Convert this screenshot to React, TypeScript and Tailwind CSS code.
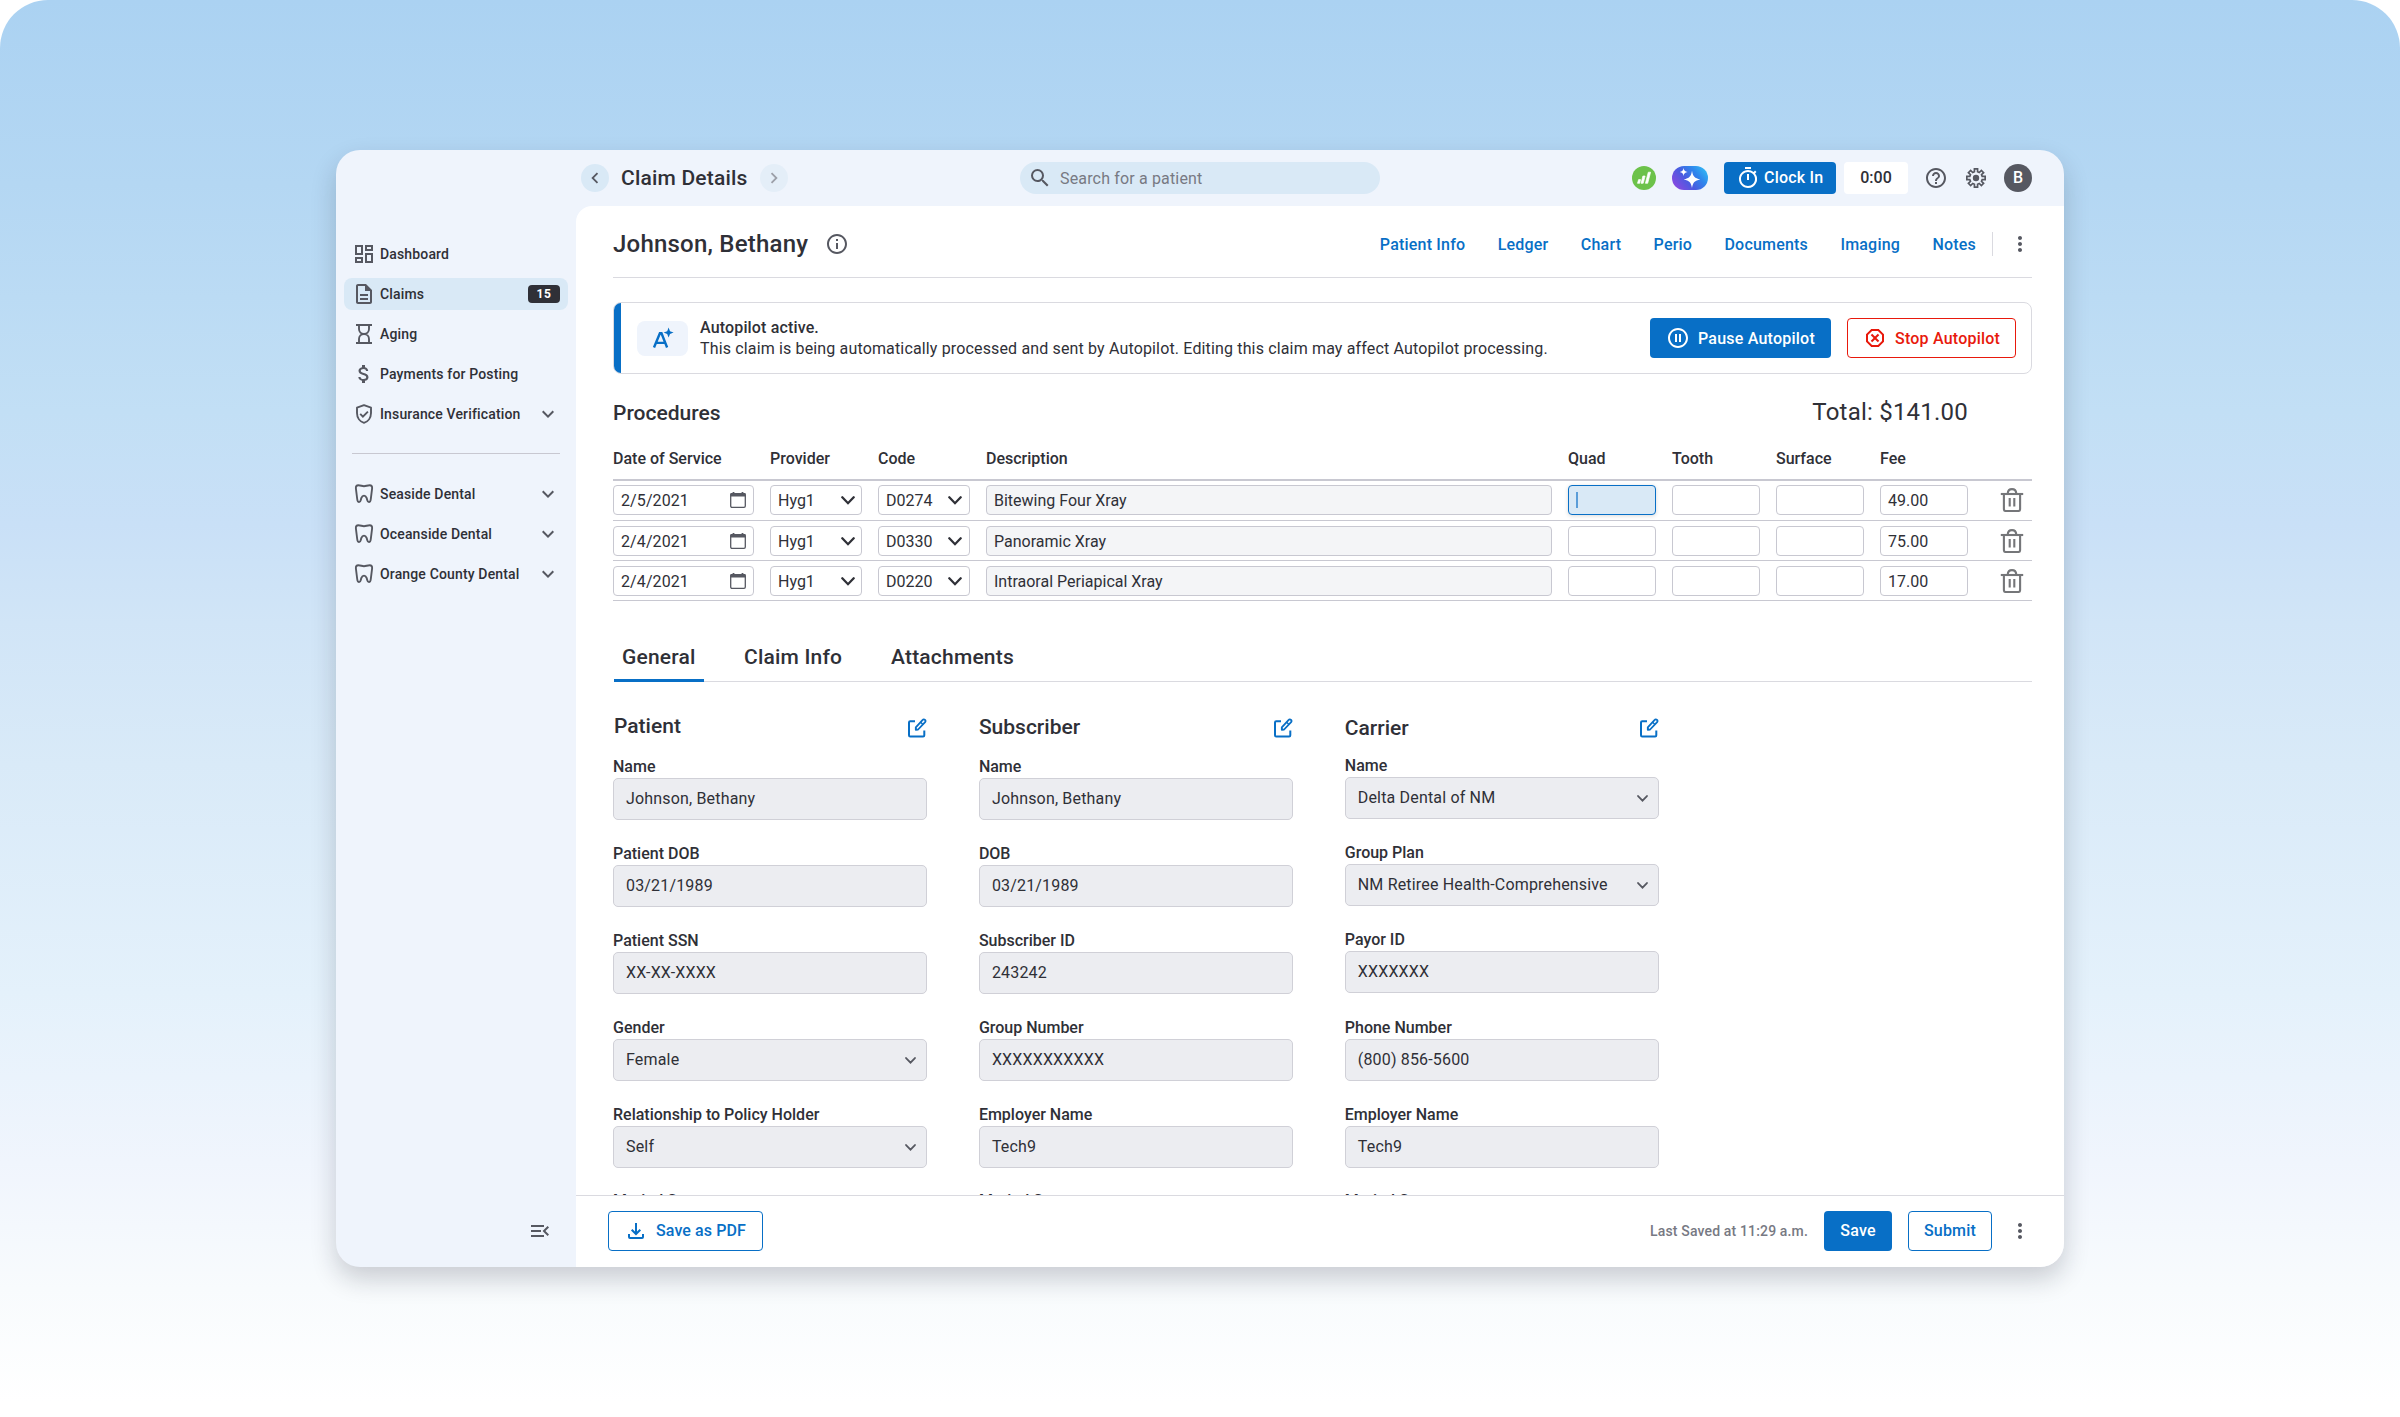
import type { ComponentType, ReactNode } from "react";
import {
  MdAttachMoney,
  MdChevronLeft,
  MdChevronRight,
  MdHelpOutline,
  MdInfoOutline,
  MdKeyboardArrowDown,
  MdMenuOpen,
  MdMoreVert,
  MdOutlineDangerous,
  MdOutlineDashboard,
  MdOutlineDescription,
  MdOutlineTimer,
  MdPauseCircleOutline,
  MdSearch,
} from "react-icons/md";

type IconProps = { className?: string };

function HourglassIcon({ className }: IconProps) {
  return (
    <svg viewBox="0 0 24 24" fill="none" stroke="currentColor" strokeWidth="2" className={className}>
      <path d="M4 3h16M4 21h16" />
      <path d="M7 3v4c0 2.8 2.2 5 5 5s5-2.2 5-5V3M7 21v-4c0-2.8 2.2-5 5-5s5 2.2 5 5v4" strokeWidth="1.9" />
    </svg>
  );
}

function ShieldCheckIcon({ className }: IconProps) {
  return (
    <svg viewBox="0 0 24 24" fill="none" stroke="currentColor" strokeWidth="1.9" className={className}>
      <path d="M12 3.100 5 5.700v5.400c0 4.600 2.900 8.600 7 9.800 4.100-1.200 7-5.200 7-9.800V5.700z" strokeLinejoin="round" />
      <path d="m8.200 11.900 2.700 2.700 5-5" />
    </svg>
  );
}

function ToothIcon({ className }: IconProps) {
  return (
    <svg viewBox="0 0 24 24" fill="none" stroke="currentColor" strokeWidth="1.9" strokeLinejoin="round" className={className}>
      <path d="M6.400 3.300c2.400 0 3.500.9 5.600.9s3.200-.9 5.600-.9c2.100 0 2.700 1.200 2.500 3.200l-1.300 10.500c-.2 1.900-.8 3.100-1.900 3.100-1.700 0-1.500-2.200-2.300-4.200C14 14.400 13 13.600 12 13.600s-2 .8-2.600 2.300c-.8 2-.6 4.200-2.300 4.200-1.100 0-1.700-1.200-1.900-3.100L3.900 6.500C3.700 4.500 4.300 3.300 6.400 3.300z" />
    </svg>
  );
}

function GearIcon({ className }: IconProps) {
  const pts: string[] = [];
  for (let i = 0; i < 8; i++) {
    const base = (i * Math.PI) / 4 - Math.PI / 2;
    const ring: [number, number][] = [
      [-0.25, 6.4],
      [-0.17, 9.3],
      [0.17, 9.3],
      [0.25, 6.4],
    ];
    for (const [da, r] of ring) {
      pts.push(`${(12 + r * Math.cos(base + da)).toFixed(2)},${(12 + r * Math.sin(base + da)).toFixed(2)}`);
    }
  }
  return (
    <svg viewBox="0 0 24 24" className={className}>
      <polygon points={pts.join(" ")} fill="none" stroke="currentColor" strokeWidth="1.7" strokeLinejoin="miter" />
      <circle cx="12" cy="12" r="3.2" fill="currentColor" />
    </svg>
  );
}

function DownloadIcon({ className }: IconProps) {
  return (
    <svg viewBox="0 0 24 24" fill="none" stroke="currentColor" strokeWidth="2" className={className}>
      <path d="M12 4v11M7.700 10.700 12 15l4.300-4.300M5 15v3c0 .6.4 1 1 1h12c.6 0 1-.4 1-1v-3" />
    </svg>
  );
}

function EditIcon({ className }: IconProps) {
  return (
    <svg viewBox="0 0 20 20" fill="none" stroke="currentColor" strokeWidth="2" strokeLinejoin="round" className={className}>
      <path d="M8 3.200H3.200A1.200 1.200 0 0 0 2 4.400v12.900c0 .7.5 1.200 1.200 1.200h12.900c.7 0 1.200-.5 1.200-1.200V12.500" />
      <path d="M8.800 11.900v-2.500l6.900-7.500a1.500 1.500 0 0 1 2.200-.1l.2.200c.6.600.6 1.500 0 2.100l-7 7.400z" strokeWidth="1.800" />
      <path d="m13.700 4.200 2.200 2.200" strokeWidth="1.400" />
    </svg>
  );
}

function TrashIcon({ className }: IconProps) {
  return (
    <svg viewBox="0 0 24 24" fill="none" stroke="currentColor" strokeWidth="2.100" className={className}>
      <path d="M.8 6h22.400" />
      <path d="M7.700 5.500C7.900 2.800 9.700 1.100 12 1.100s4.100 1.700 4.300 4.400" />
      <path d="M3.900 6v15.200c0 1.100.7 1.800 1.800 1.800h12.600c1.100 0 1.800-.7 1.800-1.800V6" />
      <path d="M9.700 10v8.500M14.300 10v8.500" />
    </svg>
  );
}

function CalendarIcon({ className }: IconProps) {
  return (
    <svg viewBox="0 0 16 16" className={className}>
      <rect x="0.7" y="1.6" width="14.6" height="13.7" rx="1.3" fill="none" stroke="currentColor" strokeWidth="1.3" />
      <path d="M.3 4.600V2.200C.3 1.500.9 1 1.600 1h1V0h1.800v1h7.200V0h1.800v1h1c.7 0 1.300.5 1.300 1.200v2.400z" fill="currentColor" />
    </svg>
  );
}

function SelectArrow({ className }: IconProps) {
  return (
    <svg viewBox="0 0 14 9" fill="none" stroke="currentColor" strokeWidth="2.300" strokeLinecap="round" className={className}>
      <path d="m1.300 1.300 5.700 5.900 5.700-5.900" />
    </svg>
  );
}

function AutopilotIcon({ className }: IconProps) {
  return (
    <svg viewBox="0 0 22 22" className={className}>
      <path d="M2 20.500 7.900 6.300h1.600l5.600 14.200M4.400 15.900h8.300" fill="none" stroke="currentColor" strokeWidth="2.400" />
      <path d="M16.600.6 18 4.200l3.600 1.400L18 7l-1.400 3.600L15.200 7l-3.600-1.400 3.600-1.400z" fill="currentColor" />
    </svg>
  );
}

function BarsBadge() {
  return (
    <svg viewBox="0 0 24 24" className="size-6">
      <circle cx="12" cy="12" r="12" fill="#6cc24a" />
      <g fill="#fff" stroke="#fff" strokeWidth="0.7" strokeLinejoin="round">
        <path d="M6.600 13.600h2l-.9 3.700H5.500z" />
        <path d="M10.900 10h2.200l-1.900 7.300H9z" />
        <path d="M16.300 6.200h2.300l-2.900 11.100h-2.300z" />
      </g>
    </svg>
  );
}

function SparklePill() {
  return (
    <div className="flex h-6 w-9 items-center justify-center rounded-full bg-[linear-gradient(50deg,#9146e0_5%,#4a5be0_42%,#2f86ec_68%,#33c9f7_100%)]">
      <svg viewBox="0 0 36 24" className="h-6 w-9" fill="#fff">
        <path d="M20 4.800c1 5.800 2.600 7.500 8.300 8.600-5.700 1.100-7.300 2.800-8.300 8.500-1-5.700-2.600-7.400-8.300-8.500 5.700-1.100 7.300-2.800 8.300-8.600z" />
        <path d="M11.600 2c.5 2.700 1.300 3.500 4 4-2.700.5-3.500 1.300-4 4-.5-2.700-1.300-3.500-4-4 2.700-.5 3.500-1.300 4-4z" />
      </svg>
    </div>
  );
}

function NavItem({
  icon: Icon,
  label,
  active,
  badge,
  expandable,
}: {
  icon: ComponentType<IconProps>;
  label: string;
  active?: boolean;
  badge?: string;
  expandable?: boolean;
}) {
  return (
    <div className={`flex h-8 items-center rounded-lg px-2 ${active ? "bg-[#d9e9f6]" : ""}`}>
      <Icon className="size-6 shrink-0 text-[#565861]" />
      <span className="ml-1 flex-1 text-sm font-medium tracking-[0.15px]">{label}</span>
      {badge && (
        <span className="flex h-[18px] w-8 items-center justify-center rounded bg-[#2f3037] text-xs font-bold tracking-[0.5px] text-white">
          {badge}
        </span>
      )}
      {expandable && <MdKeyboardArrowDown className="size-6 text-[#565861]" />}
    </div>
  );
}

function Sidebar() {
  return (
    <aside className="flex w-60 flex-col px-2 pt-8">
      <nav className="flex flex-col gap-2">
        <NavItem icon={MdOutlineDashboard} label="Dashboard" />
        <NavItem icon={MdOutlineDescription} label="Claims" active badge="15" />
        <NavItem icon={HourglassIcon} label="Aging" />
        <NavItem icon={MdAttachMoney} label="Payments for Posting" />
        <NavItem icon={ShieldCheckIcon} label="Insurance Verification" expandable />
      </nav>
      <hr className="mx-2 mt-[23px] mb-6 border-[#c8c8d1]" />
      <nav className="flex flex-col gap-2">
        <NavItem icon={ToothIcon} label="Seaside Dental" expandable />
        <NavItem icon={ToothIcon} label="Oceanside Dental" expandable />
        <NavItem icon={ToothIcon} label="Orange County Dental" expandable />
      </nav>
      <MdMenuOpen className="mt-auto mr-4 mb-6 size-6 self-end text-[#565861]" />
    </aside>
  );
}

function TopBar() {
  return (
    <header className="flex h-14 shrink-0 items-center pr-8 pl-[245px]">
      <div className="flex w-[439px] items-center">
        <span className="flex size-7 items-center justify-center rounded-full bg-[#d9e9f6]">
          <MdChevronLeft className="size-[22px] text-[#565861]" />
        </span>
        <h1 className="ml-3 pt-0.5 text-[21px] font-medium tracking-[0.2px]">Claim Details</h1>
        <span className="ml-3 flex size-7 items-center justify-center rounded-full bg-[#e4eef8]">
          <MdChevronRight className="size-[22px] text-[#9c9fa8]" />
        </span>
      </div>
      <div className="flex h-8 w-[360px] items-center rounded-full bg-[#d9e9f6] pl-2">
        <MdSearch className="size-6 text-[#565861]" />
        <span className="ml-2 pt-0.5 text-base tracking-[0.16px] text-[#777983]">Search for a patient</span>
      </div>
      <div className="ml-auto flex items-center">
        <BarsBadge />
        <div className="ml-4">
          <SparklePill />
        </div>
        <button className="ml-4 flex h-8 w-28 items-center rounded bg-[#086fc6] pl-3 text-base font-medium tracking-[0.2px] text-white">
          <MdOutlineTimer className="mr-1 size-6" />
          Clock In
        </button>
        <span className="ml-2 flex h-8 w-16 items-center justify-center rounded bg-white text-base font-medium">0:00</span>
        <MdHelpOutline className="ml-4 size-6 text-[#565861]" />
        <GearIcon className="ml-4 size-6 text-[#565861]" />
        <span className="ml-4 flex size-7 items-center justify-center rounded-full bg-[#565861] text-base font-medium text-white">
          B
        </span>
      </div>
    </header>
  );
}

const links = ["Patient Info", "Ledger", "Chart", "Perio", "Documents", "Imaging", "Notes"];

function PatientHeader() {
  return (
    <div className="flex h-[72px] shrink-0 items-center border-b border-[#dadae0] pt-[5px]">
      <h2 className="text-2xl font-medium tracking-[0.22px]">Johnson, Bethany</h2>
      <MdInfoOutline className="ml-[17px] size-6 text-[#565861]" />
      <div className="ml-auto flex items-center">
        <div className="flex gap-[32.4px] pt-px text-base font-medium tracking-[0.2px] text-[#086fc6]">
          {links.map((l) => (
            <a key={l}>{l}</a>
          ))}
        </div>
        <span className="ml-4 h-6 w-px bg-[#dadae0]" />
        <MdMoreVert className="ml-[15px] size-6 text-[#565861]" />
      </div>
    </div>
  );
}

function AutopilotBanner() {
  return (
    <div className="mt-6 flex h-[72px] shrink-0 overflow-hidden rounded-lg border border-[#dadae0]">
      <span className="w-[7px] bg-[#086fc6]" />
      <div className="flex flex-1 items-center pr-[15px] pl-4">
        <span className="flex h-[35px] w-[51px] items-center justify-center rounded-lg bg-[#eff4fc]">
          <AutopilotIcon className="size-[22px] text-[#086fc6]" />
        </span>
        <p className="ml-3 text-base leading-[21px] tracking-[0.15px]">
          <strong className="font-medium">Autopilot active.</strong>
          <br />
          This claim is being automatically processed and sent by Autopilot. Editing this claim may affect Autopilot processing.
        </p>
        <button className="ml-auto flex h-10 w-[181px] items-center rounded bg-[#086fc6] pl-4 text-base font-medium tracking-[0.22px] text-white">
          <MdPauseCircleOutline className="mr-2 size-6" />
          <span className="pt-px">Pause Autopilot</span>
        </button>
        <button className="ml-4 flex h-10 w-[169px] items-center rounded border border-[#e8190c] pl-[15px] text-base font-medium tracking-[0.22px] text-[#e8190c]">
          <MdOutlineDangerous className="mr-2 size-6" />
          <span className="pt-px">Stop Autopilot</span>
        </button>
      </div>
    </div>
  );
}

const columns = ["Date of Service", "Provider", "Code", "Description", "Quad", "Tooth", "Surface", "Fee"];

const procedures = [
  { date: "2/5/2021", provider: "Hyg1", code: "D0274", description: "Bitewing Four Xray", fee: "49.00", focused: true },
  { date: "2/4/2021", provider: "Hyg1", code: "D0330", description: "Panoramic Xray", fee: "75.00", focused: false },
  { date: "2/4/2021", provider: "Hyg1", code: "D0220", description: "Intraoral Periapical Xray", fee: "17.00", focused: false },
];

const rowGrid = "grid grid-cols-[141px_92px_92px_566px_88px_88px_88px_88px_1fr] gap-4";

function Cell({ text, children, className = "bg-white" }: { text?: string; children?: ReactNode; className?: string }) {
  return (
    <div className={`flex h-[30px] items-center justify-between rounded border border-[#c8c8d1] px-[7px] text-base ${className}`}>
      <span className="pt-0.5">{text}</span>
      {children}
    </div>
  );
}

function Procedures() {
  return (
    <section className="shrink-0">
      <div className="mt-[22px] mb-px flex h-8 items-baseline justify-between pr-16">
        <h3 className="text-[21px] leading-8 font-medium">Procedures</h3>
        <span className="text-2xl leading-8 tracking-[0.22px]">Total: $141.00</span>
      </div>
      <div className={`${rowGrid} h-[52px] items-center border-b-2 border-[#c8c8d1] pt-[9px] text-base font-medium`}>
        {columns.map((c) => (
          <span key={c}>{c}</span>
        ))}
      </div>
      {procedures.map((p) => (
        <div key={p.code} className={`${rowGrid} h-10 items-start border-b border-[#c8c8d1] ${p.focused ? "pt-1" : "pt-[5px]"}`}>
          <Cell text={p.date} className="bg-white tracking-[0.1px]">
            <CalendarIcon className="size-4 text-[#565861]" />
          </Cell>
          <Cell text={p.provider} className="bg-white pr-1.5">
            <SelectArrow className="h-[9px] w-[14px]" />
          </Cell>
          <Cell text={p.code}>
            <SelectArrow className="h-[9px] w-[14px]" />
          </Cell>
          <Cell text={p.description} className="bg-[#f4f5f7]" />
          {p.focused ? (
            <div className="flex h-[30px] items-center rounded border border-[#086fc6] bg-[#d9e9f6] px-[7px] shadow-[0_1px_4px_rgba(0,0,0,0.15)]">
              <span className="h-4 w-[2px] bg-[#5b9dd8]" />
            </div>
          ) : (
            <Cell />
          )}
          <Cell />
          <Cell />
          <Cell text={p.fee} />
          <TrashIcon className="mt-[3px] mr-2 size-6 justify-self-end text-[#757679]" />
        </div>
      ))}
    </section>
  );
}

function Tabs() {
  return (
    <div className="mt-8 ml-px flex h-[49px] shrink-0 gap-8 border-b border-[#dadae0] text-[21px] font-medium tracking-[0.2px]">
      <div className="relative flex h-12 w-[90px] items-center pt-0.5 pl-2">
        General
        <span className="absolute -bottom-px left-0 h-[3px] w-full bg-[#086fc6]" />
      </div>
      <div className="flex h-12 w-[123px] items-center pt-0.5 pl-2">Claim Info</div>
      <div className="flex h-12 items-center pt-0.5">Attachments</div>
    </div>
  );
}

type FieldData = { label: string; value: string; select?: boolean };

function Field({ label, value, select }: FieldData) {
  return (
    <div>
      <div className="h-6 text-base leading-[26px] font-medium">{label}</div>
      <div className="flex h-[42px] items-center justify-between rounded-[5px] border border-[#d0d0d7] bg-[#ecedf1] pr-[10px] pl-3 text-base tracking-[0.17px]">
        {value}
        {select && <SelectArrow className="h-[7px] w-[11px] text-[#565861]" />}
      </div>
    </div>
  );
}

const patient: FieldData[] = [
  { label: "Name", value: "Johnson, Bethany" },
  { label: "Patient DOB", value: "03/21/1989" },
  { label: "Patient SSN", value: "XX-XX-XXXX" },
  { label: "Gender", value: "Female", select: true },
  { label: "Relationship to Policy Holder", value: "Self", select: true },
];
const subscriber: FieldData[] = [
  { label: "Name", value: "Johnson, Bethany" },
  { label: "DOB", value: "03/21/1989" },
  { label: "Subscriber ID", value: "243242" },
  { label: "Group Number", value: "XXXXXXXXXXX" },
  { label: "Employer Name", value: "Tech9" },
];
const carrier: FieldData[] = [
  { label: "Name", value: "Delta Dental of NM", select: true },
  { label: "Group Plan", value: "NM Retiree Health-Comprehensive", select: true },
  { label: "Payor ID", value: "XXXXXXX" },
  { label: "Phone Number", value: "(800) 856-5600" },
  { label: "Employer Name", value: "Tech9" },
];

function Section({
  title,
  fields,
  titleClass = "",
  listClass = "pt-[10px] gap-[21px]",
}: {
  title: string;
  fields: FieldData[];
  titleClass?: string;
  listClass?: string;
}) {
  return (
    <div>
      <div className="flex h-8 items-center justify-between">
        <h4 className={`text-[21px] font-medium ${titleClass}`}>{title}</h4>
        <EditIcon className="size-5 text-[#086fc6]" />
      </div>
      <div className={`flex flex-col ${listClass}`}>
        {fields.map((f) => (
          <Field key={f.label} {...f} />
        ))}
        <div className="-mt-px h-6 text-base leading-[26px] font-medium">Marital Status</div>
      </div>
    </div>
  );
}

function Footer() {
  return (
    <footer className="flex h-[72px] shrink-0 items-center border-t border-[#dadae0] px-8 pb-px">
      <button className="flex h-10 w-[155px] items-center rounded border border-[#086fc6] pl-[15px] text-base font-medium tracking-[0.1px] text-[#086fc6]">
        <DownloadIcon className="mr-2 size-6" />
        Save as PDF
      </button>
      <span className="ml-auto text-sm font-medium tracking-[0.15px] text-[#777983]">Last Saved at 11:29 a.m.</span>
      <button className="ml-4 h-10 w-[68px] rounded bg-[#086fc6] text-base font-medium tracking-[0.2px] text-white">Save</button>
      <button className="ml-4 h-10 w-[84px] rounded border border-[#086fc6] text-base font-medium tracking-[0.2px] text-[#086fc6]">
        Submit
      </button>
      <MdMoreVert className="ml-4 size-6 text-[#565861]" />
    </footer>
  );
}

export default function App() {
  return (
    <div className="h-[1417px] w-[2400px] overflow-hidden bg-white">
      <div className="h-full rounded-t-[48px] bg-[linear-gradient(180deg,#abd2f2_0%,#b4d7f3_13%,#c2dff5_29%,#c9e0f7_37%,#d1e5f7_44%,#d9eaf8_54%,#e4f1fb_70%,#f0f5fd_82%,#f8fbfd_91%,#ffffff_99%)] px-[336px] pt-[150px] font-['Roboto',sans-serif] text-[#2f3037]">
        <div className="flex h-[1117px] w-[1728px] flex-col overflow-hidden rounded-3xl bg-[#eff4fc] shadow-[0_12px_26px_rgba(20,25,40,0.2)]">
          <TopBar />
          <div className="flex min-h-0 flex-1">
            <Sidebar />
            <main className="flex min-w-0 flex-1 flex-col rounded-tl-2xl bg-white">
              <div className="flex min-h-0 flex-1 flex-col overflow-hidden pr-8 pl-[37px]">
                <PatientHeader />
                <AutopilotBanner />
                <Procedures />
                <Tabs />
                <div className="mt-[30px] grid min-h-0 grid-cols-[314.400px_314.400px_314.400px] gap-[51.5px]">
                  <Section title="Patient" fields={patient} titleClass="pb-[3px] pl-px" />
                  <Section title="Subscriber" fields={subscriber} titleClass="pb-px" />
                  <Section title="Carrier" fields={carrier} titleClass="pt-px" listClass="pt-[9px] gap-[21.2px]" />
                </div>
              </div>
              <Footer />
            </main>
          </div>
        </div>
      </div>
    </div>
  );
}
